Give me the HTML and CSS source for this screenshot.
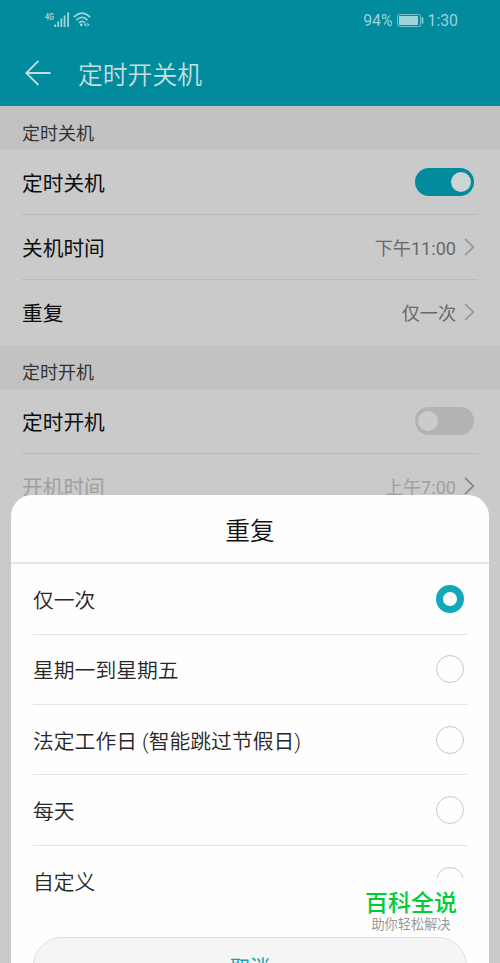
FILE: index.html
```
<!DOCTYPE html>
<html lang="zh-CN">
<head>
    <meta charset="UTF-8">
    <meta name="viewport" content="width=device-width, initial-scale=1.0">
    <title>定时开关机</title>
    <link rel="stylesheet" href="styles.css">
</head>
<body>

<div class="screen">
    <header class="header">
        <div class="status-bar">
            <div class="status-left">
                <svg class="network" width="10" height="11" viewBox="0 0 10 11">
                    <text x="0" y="7.5" textLength="9" lengthAdjust="spacingAndGlyphs">4G</text>
                </svg>
                <svg class="signal" width="16" height="15" viewBox="0 0 16 15" fill="none" stroke="currentColor" stroke-width="1.8">
                    <path d="M1.2 15v-2.6M4.2 15v-5.4M7.4 15V6.6M10.6 15V3.6M14.1 15V.6"/>
                </svg>
                <svg class="wifi" width="18" height="15" viewBox="0 0 18 15" fill="none" stroke="currentColor" stroke-width="1.7">
                    <path d="M.8 5.2Q9-2.8 17.2 5.2M3.4 8.1Q9 2.6 14.6 8.1M6 10.8Q9 8 12 10.8"/>
                    <path d="M13.2 10.8v4l-2.2-2zM14.4 10.8v4l2.2-2z" fill="currentColor" stroke="none"/>
                    <circle cx="8.2" cy="12.9" r="1.4" fill="currentColor" stroke="none"/>
                </svg>
            </div>
            <div class="status-right">
                <span>94%</span>
                <svg class="battery" width="27" height="13" viewBox="0 0 27 13">
                    <rect x=".5" y=".5" width="23" height="12" rx="1.8" fill="none" stroke="currentColor" opacity=".75"/>
                    <rect x="2" y="2" width="19" height="9" fill="currentColor"/>
                    <path d="M25.5 3.5v6" stroke="currentColor" stroke-width="1.6"/>
                </svg>
                <span>1:30</span>
            </div>
        </div>
        <div class="title-bar">
            <svg class="back" width="26" height="26" viewBox="0 0 26 26" fill="none" stroke="currentColor" stroke-width="1.8">
                <path d="M13.5.8L1.3 13l12.2 12.2M1.3 13h24.2"/>
            </svg>
            <h1>定时开关机</h1>
        </div>
    </header>

    <main>
        <h2 class="section">定时关机</h2>
        <div class="group">
            <div class="row">
                <span>定时关机</span>
                <span class="switch on"></span>
            </div>
            <div class="row">
                <span>关机时间</span>
                <span class="value">下午11:00
                    <svg class="chevron" width="11" height="18" viewBox="0 0 11 18"><path d="M1 .8L9.4 9 1 17.2"/></svg>
                </span>
            </div>
            <div class="row">
                <span>重复</span>
                <span class="value">仅一次
                    <svg class="chevron" width="11" height="18" viewBox="0 0 11 18"><path d="M1 .8L9.4 9 1 17.2"/></svg>
                </span>
            </div>
        </div>
        <h2 class="section">定时开机</h2>
        <div class="group">
            <div class="row">
                <span>定时开机</span>
                <span class="switch"></span>
            </div>
            <div class="row disabled">
                <span>开机时间</span>
                <span class="value">上午7:00
                    <svg class="chevron" width="11" height="18" viewBox="0 0 11 18"><path d="M1 .8L9.4 9 1 17.2"/></svg>
                </span>
            </div>
        </div>
    </main>

    <div class="sheet">
        <div class="sheet-title">重复</div>
        <div class="options">
            <div class="option"><span>仅一次</span><span class="radio checked"></span></div>
            <div class="option"><span>星期一到星期五</span><span class="radio"></span></div>
            <div class="option"><span>法定工作日 (智能跳过节假日)</span><span class="radio"></span></div>
            <div class="option"><span>每天</span><span class="radio"></span></div>
            <div class="option"><span>自定义</span><span class="radio"></span></div>
        </div>
        <button class="cancel">取消</button>
    </div>

    <div class="watermark">
        <div class="brand">百科全说</div>
        <div class="slogan">助你轻松解决</div>
    </div>
</div>

</body>
</html>
```
FILE: styles.css
```
* {
    box-sizing: border-box;
}
body {
    margin: 0;
    font-family: Roboto, "Noto Sans CJK SC", sans-serif;
}
h1, h2 {
    margin: 0;
    font-weight: normal;
}
svg {
    display: block;
}
.screen {
    position: relative;
    width: 500px;
    height: 963px;
    overflow: hidden;
    background-color: #cacaca;
}

/* header */
.header {
    height: 106px;
    background-color: #028b9c;
    color: #c4dfe2;
    border-bottom: 1px solid #2a8291;
}
.status-bar {
    display: flex;
    justify-content: space-between;
    height: 40px;
    padding: 0 42px 0 45px;
    color: #9bd3da;
}
.status-left {
    display: flex;
    align-items: flex-start;
    padding-top: 12px;
}
.network {
    margin-right: -1px;
    overflow: visible;
    font-size: 9.5px;
    font-weight: bold;
    fill: currentColor;
}
.wifi {
    margin-left: 3px;
}
.status-right {
    display: flex;
    align-items: center;
    font-size: 15.8px;
}
.battery {
    margin: 0 4px 0 4px;
}
.title-bar {
    display: flex;
    align-items: center;
    height: 65px;
    padding-left: 25px;
}
.title-bar h1 {
    margin-left: 27px;
    font-size: 24.8px;
    font-weight: 350;
}

/* settings list */
.section {
    display: flex;
    align-items: center;
    height: 44px;
    padding: 8px 22px 0;
    font-size: 18px;
    font-weight: 400;
    color: #333;
    background-color: #c2c2c2;
}
.group {
    padding: 0 22px;
}
.row {
    display: flex;
    align-items: center;
    justify-content: space-between;
    height: 65px;
    padding-right: 4px;
    border-bottom: 1px solid #b9b9b9;
    font-size: 20.7px;
    color: #0c0c0c;
}
.row:last-child {
    padding-bottom: 2px;
    border-bottom: none;
}
.value {
    display: flex;
    align-items: center;
    gap: 8px;
    margin-right: -1px;
    font-size: 18.1px;
    color: #696969;
}
.chevron {
    fill: none;
    stroke: #999;
    stroke-width: 1.8;
}
.disabled,
.disabled .value {
    color: #9f9f9f;
}
.disabled .chevron {
    stroke: #888;
}
.switch {
    width: 59px;
    height: 28px;
    padding: 4px 3px;
    border-radius: 14px;
    background-color: #b3b3b3;
}
.switch::before {
    content: "";
    display: block;
    width: 20px;
    height: 20px;
    border-radius: 50%;
    background-color: #cbcbcb;
}
.switch.on {
    background-color: #028b9c;
}
.switch.on::before {
    margin-left: auto;
    background-color: #ccd4d5;
}

/* bottom sheet */
.sheet {
    position: absolute;
    top: 495px;
    left: 11px;
    width: 478px;
    height: 510px;
    border-radius: 21px 21px 0 0;
    background-color: #fefefe;
}
.sheet-title {
    display: flex;
    align-items: center;
    justify-content: center;
    height: 69px;
    border-bottom: 2px solid #e5e5e5;
    font-size: 24.7px;
    font-weight: 350;
    color: #111;
}
.options {
    padding: 0 22px;
}
.option {
    display: flex;
    align-items: center;
    justify-content: space-between;
    height: 70.4px;
    padding-right: 3px;
    border-bottom: 1px solid #e2e2e2;
    font-size: 20.8px;
    font-weight: 350;
    color: #262626;
}
.option:first-child {
    height: 70.6px;
}
.option:last-child {
    border-bottom: none;
}
.radio {
    width: 28px;
    height: 28px;
    border: 1.5px solid #c8c8c8;
    border-radius: 50%;
}
.radio.checked {
    border: 7px solid #12a8b8;
}
.cancel {
    display: block;
    width: 434px;
    height: 58px;
    margin: 21px 22px 0;
    border: 1px solid #dedede;
    border-radius: 29px;
    background-color: #f5f5f5;
    font-family: inherit;
    font-size: 20px;
    color: #12a0b0;
}

/* watermark */
.watermark {
    position: absolute;
    top: 878px;
    left: 350px;
    width: 122px;
    height: 59px;
    background-color: #fefefe;
    text-align: center;
}
.brand {
    margin-top: 10px;
    font-size: 23px;
    line-height: 31px;
    font-weight: 500;
    color: #0c3;
}
.slogan {
    font-size: 13.2px;
    line-height: 11px;
    color: #999;
}
```
